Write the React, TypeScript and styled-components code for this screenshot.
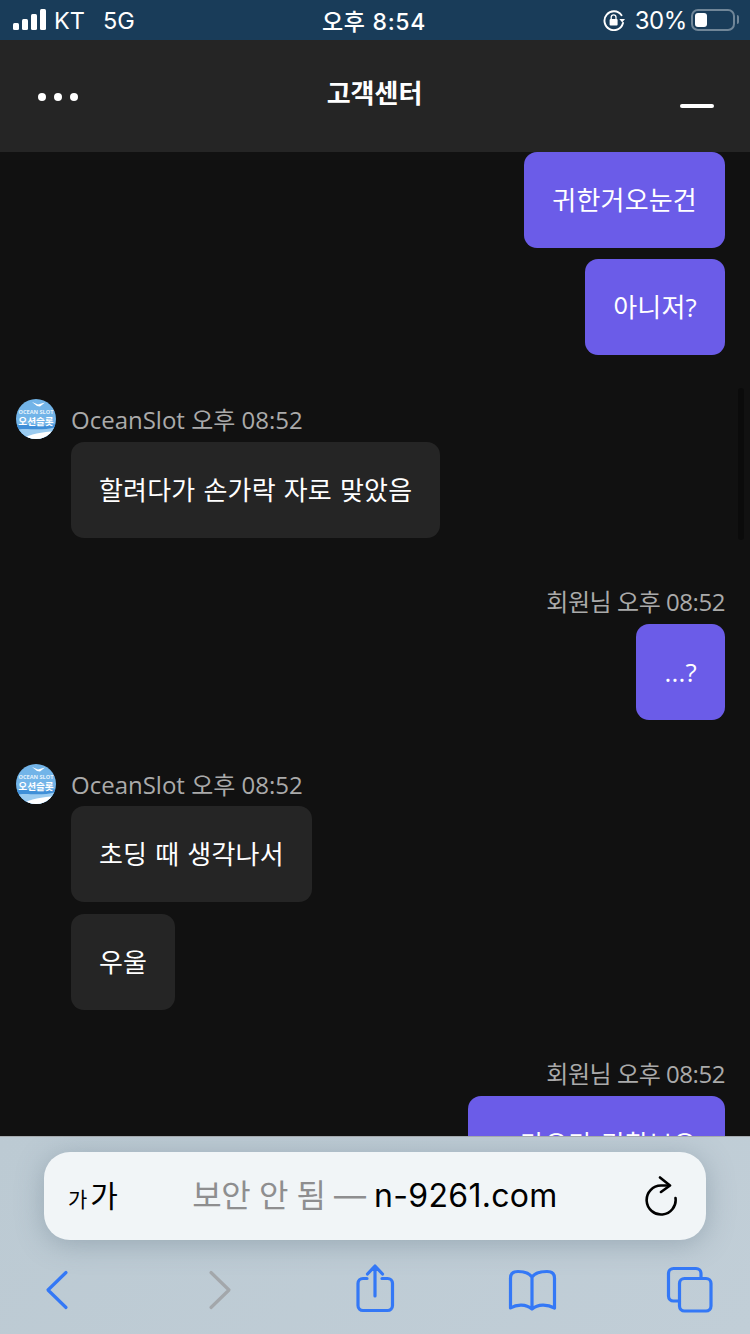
import React from 'react';
import styled, { createGlobalStyle } from 'styled-components';

const Global = createGlobalStyle`
  html, body {
    margin: 0;
    padding: 0;
    background: #111111;
  }
  * {
    box-sizing: border-box;
  }
`;

const Page = styled.div`
  width: 750px;
  height: 1334px;
  display: flex;
  flex-direction: column;
  overflow: hidden;
  font-family: 'Open Sans', 'Noto Sans CJK KR', sans-serif;
`;

const StatusBar = styled.div`
  height: 40px;
  flex: none;
  background: #193c59;
  color: #ffffff;
  display: grid;
  grid-template-columns: 1fr auto 1fr;
  align-items: center;
  padding: 0 15px 0 13px;
  font-family: Inter, 'Noto Sans CJK KR', sans-serif;
  font-size: 24px;
`;

const StatusLeft = styled.div`
  display: flex;
  align-items: center;
`;

const Signal = styled.div`
  display: flex;
  align-items: flex-end;
  gap: 3px;
  height: 22px;
  margin-right: 8px;
  margin-bottom: 2px;
`;

const SignalBar = styled.span<{ $h: number }>`
  width: 6px;
  height: ${(p) => p.$h}px;
  background: #ffffff;
  border-radius: 1.5px;
`;

const Carrier = styled.span<{ $gap?: number }>`
  margin-left: ${(p) => p.$gap || 0}px;
  font-weight: 400;
  font-size: 23.5px;
`;

const Clock = styled.div`
  font-weight: 500;
  font-size: 23px;
  letter-spacing: 0.7px;
`;

const StatusRight = styled.div`
  display: flex;
  align-items: center;
  justify-content: flex-end;
`;

const Percent = styled.span`
  margin: 0 4px 0 10px;
  letter-spacing: -0.4px;
`;

const Battery = styled.div`
  width: 44px;
  height: 22px;
  border: 2px solid rgba(255, 255, 255, 0.38);
  border-radius: 7px;
  padding: 2px;
  position: relative;
  &::after {
    content: '';
    position: absolute;
    right: -6px;
    top: 4px;
    width: 2px;
    height: 9px;
    border-radius: 0 2px 2px 0;
    background: rgba(255, 255, 255, 0.38);
  }
`;

const BatteryFill = styled.div`
  width: 12px;
  height: 100%;
  background: #ffffff;
  border-radius: 3px;
`;

const Header = styled.div`
  height: 112px;
  flex: none;
  background: #252525;
  display: grid;
  grid-template-columns: 1fr auto 1fr;
  align-items: center;
  padding: 0 36px 0 38px;
`;

const Dots = styled.div`
  display: flex;
  gap: 8px;
  margin-top: 1px;
`;

const Dot = styled.span`
  width: 8px;
  height: 8px;
  border-radius: 50%;
  background: #ffffff;
`;

const Title = styled.div`
  color: #ffffff;
  font-size: 26px;
  line-height: 36px;
  font-weight: 700;
  margin: 0 3px 8px 0;
  font-family: 'Noto Sans CJK KR', sans-serif;
`;

const Minimize = styled.span`
  justify-self: end;
  width: 34px;
  height: 4px;
  border-radius: 2px;
  background: #ffffff;
  margin-top: 19px;
`;

const Chat = styled.div`
  flex: 1;
  min-height: 0;
  position: relative;
  overflow: hidden;
  background: #111111;
  padding: 0 25px 0 16px;
  display: flex;
  flex-direction: column;
`;

const ScrollThumb = styled.div`
  position: absolute;
  right: 6px;
  top: 236px;
  width: 6px;
  height: 152px;
  border-radius: 3px;
  background: #0b0b0b;
`;

const Group = styled.div<{ $mine?: boolean; $top?: number }>`
  flex: none;
  display: flex;
  flex-direction: column;
  align-items: ${(p) => (p.$mine ? 'flex-end' : 'flex-start')};
  gap: 11.4px;
  margin-top: ${(p) => p.$top || 0}px;
`;

const SenderRow = styled.div`
  display: flex;
  gap: 15px;
  height: 42.6px;
  margin-bottom: -11.4px;
`;

const Avatar = styled.svg`
  width: 40px;
  height: 40px;
  display: block;
  flex: none;
`;

const Meta = styled.div<{ $mine?: boolean }>`
  color: #aaaaaa;
  font-size: 24px;
  line-height: ${(p) => (p.$mine ? 24 : 34)}px;
  height: 34px;
  margin-top: ${(p) => (p.$mine ? 0 : 4)}px;
  margin-bottom: ${(p) => (p.$mine ? -11.4 : 0)}px;
  letter-spacing: ${(p) => (p.$mine ? -0.45 : 0)}px;
  white-space: nowrap;
`;

const Bubble = styled.div<{ $mine?: boolean }>`
  flex: none;
  height: 96px;
  padding: 28px;
  margin-left: ${(p) => (p.$mine ? 0 : 55)}px;
  border-radius: 13px;
  font-size: 26px;
  line-height: 40px;
  letter-spacing: 0.2px;
  word-spacing: 1px;
  white-space: nowrap;
  color: #ffffff;
  background: ${(p) => (p.$mine ? '#6b5ce8' : '#252525')};
`;

const Toolbar = styled.div`
  height: 198px;
  flex: none;
  border-top: 1px solid #a6abaf;
  background: linear-gradient(135deg, #bccad3 0%, #c1ced7 100%);
  padding: 15px 0 0;
  font-family: Inter, 'Noto Sans CJK KR', sans-serif;
`;

const UrlBar = styled.div`
  margin: 0 44px;
  height: 88px;
  border-radius: 26px;
  background: #f1f5f7;
  box-shadow: 0 4px 28px rgba(90, 110, 125, 0.38);
  display: grid;
  grid-template-columns: 100px 1fr 100px;
  align-items: center;
`;

const FontSize = styled.div`
  display: flex;
  align-items: baseline;
  gap: 3px;
  padding-left: 24px;
  color: #000000;
  font-family: 'Noto Sans CJK KR', sans-serif;
`;

const FontGlyph = styled.span<{ $size: number }>`
  font-size: ${(p) => p.$size}px;
  line-height: 40px;
`;

const Address = styled.div`
  text-align: center;
  font-size: 32px;
  line-height: 44px;
  letter-spacing: 0.3px;
  color: #000000;
  white-space: nowrap;
`;

const Insecure = styled.span`
  color: #8e8e8f;
  letter-spacing: -0.45px;
`;

const Reload = styled.svg`
  justify-self: end;
  margin-right: 26px;
  width: 36px;
  height: 40px;
`;

const Nav = styled.div`
  display: flex;
  justify-content: space-between;
  margin-top: 20px;
  padding: 0 30px 0 27px;
`;

const NavIcon = styled.svg`
  width: 60px;
  height: 60px;
  display: block;
  fill: none;
  stroke-linecap: round;
  stroke-linejoin: round;
  stroke-width: 3.2px;
`;

const Logo = () => (
  <Avatar viewBox="0 0 40 40">
    <defs>
      <clipPath id="logo-clip">
        <circle cx="20" cy="20" r="20" />
      </clipPath>
    </defs>
    <g clipPath="url(#logo-clip)">
      <rect width="40" height="40" fill="#72b4e8" />
      <path d="M0 26 C10 24 24 29 40 25 V40 H0 Z" fill="#3f8fd8" />
      <path d="M0 31 C10 28 22 33 40 28 V40 H0 Z" fill="#9acbf0" />
      <path d="M6 40 C14 35 26 33 40 32 V40 Z" fill="#ffffff" />
      <path d="M16 3 L22 5.5 L29 3.5 L24 7.5 L21 7 Z" fill="#ffffff" />
      <text x="20" y="14.5" textAnchor="middle" fontSize="5.6" fontWeight="700" fill="#e4f2fc" fontFamily="Open Sans, sans-serif">OCEAN SLOT</text>
      <text x="20" y="25.5" textAnchor="middle" fontSize="9.6" fontWeight="700" fill="#ffffff" fontFamily="Noto Sans CJK KR, sans-serif">오션슬롯</text>
    </g>
  </Avatar>
);

const App = () => {
  return (
    <Page>
      <Global />
      <StatusBar>
        <StatusLeft>
          <Signal>
            <SignalBar $h={7} />
            <SignalBar $h={11} />
            <SignalBar $h={16} />
            <SignalBar $h={21} />
          </Signal>
          <Carrier>KT</Carrier>
          <Carrier $gap={18}>5G</Carrier>
        </StatusLeft>
        <Clock>오후 8:54</Clock>
        <StatusRight>
          <svg width="22" height="22" viewBox="0 0 22 22" fill="none">
            <path d="M18.5 6.2 A9.4 9.4 0 1 0 20 14" stroke="#fff" strokeWidth="1.9" strokeLinecap="round" />
            <path d="M16.4 10 L22 10 L19.2 13.6 Z" fill="#fff" />
            <rect x="6.6" y="10" width="8" height="6.4" rx="1" fill="#fff" />
            <path d="M8.2 10 V8.2 a2.4 2.4 0 0 1 4.8 0 V10" stroke="#fff" strokeWidth="1.3" />
          </svg>
          <Percent>30%</Percent>
          <Battery>
            <BatteryFill />
          </Battery>
        </StatusRight>
      </StatusBar>

      <Header>
        <Dots>
          <Dot />
          <Dot />
          <Dot />
        </Dots>
        <Title>고객센터</Title>
        <Minimize />
      </Header>

      <Chat>
        <Group $mine>
          <Bubble $mine>귀한거오눈건</Bubble>
          <Bubble $mine>아니저?</Bubble>
        </Group>

        <Group $top={43.6}>
          <SenderRow>
            <Logo />
            <Meta>OceanSlot 오후 08:52</Meta>
          </SenderRow>
          <Bubble>할려다가 손가락 자로 맞았음</Bubble>
        </Group>

        <Group $mine $top={52}>
          <Meta $mine>회원님 오후 08:52</Meta>
          <Bubble $mine>...?</Bubble>
        </Group>

        <Group $top={44}>
          <SenderRow>
            <Logo />
            <Meta>OceanSlot 오후 08:52</Meta>
          </SenderRow>
          <Bubble>초딩 때 생각나서</Bubble>
          <Bubble>우울</Bubble>
        </Group>

        <Group $mine $top={52}>
          <Meta $mine>회원님 오후 08:52</Meta>
          <Bubble $mine>ㄴ라오라 귀찮보오</Bubble>
        </Group>

        <ScrollThumb />
      </Chat>

      <Toolbar>
        <UrlBar>
          <FontSize>
            <FontGlyph $size={21}>가</FontGlyph>
            <FontGlyph $size={30}>가</FontGlyph>
          </FontSize>
          <Address>
            <Insecure>보안 안 됨 — </Insecure>n-9261.com
          </Address>
          <Reload viewBox="0 0 36 40" fill="none" stroke="#000" strokeWidth="2.6" strokeLinecap="round" strokeLinejoin="round">
            <path d="M31.5 22 A14.5 14.5 0 1 1 17 9.5 H25" />
            <path d="M16 1.5 L26 9.5 L17 16" />
          </Reload>
        </UrlBar>
        <Nav>
          <NavIcon viewBox="0 0 60 60" stroke="#3478f6">
            <path d="M39 12.5 L21 30 L39 47.5" />
          </NavIcon>
          <NavIcon viewBox="0 0 60 60" stroke="#a3a7ab">
            <path d="M26 12.5 L44 30 L26 47.5" />
          </NavIcon>
          <NavIcon viewBox="0 0 60 60" stroke="#3478f6">
            <path d="M23 18.5 H19 a5 5 0 0 0 -5 5 V45.5 a5 5 0 0 0 5 5 H43.5 a5 5 0 0 0 5 -5 V23.5 a5 5 0 0 0 -5 -5 H38" />
            <path d="M31 36 V6 M23.5 14 L31 6 L38.5 14" />
          </NavIcon>
          <NavIcon viewBox="0 0 60 60" stroke="#3478f6">
            <path d="M30 17 C27 13 21 11.5 16 11.5 C11 11.5 8.5 13.5 8.5 18 V48 C15 44 24 44 30 49 C36 44 45 44 52.5 48 V18 C52.5 13.5 50 11.5 45 11.5 C39 11.5 33 13 30 17 Z M30 17 V49" />
          </NavIcon>
          <NavIcon viewBox="0 0 60 60" stroke="#3478f6">
            <path d="M19.5 41 H13.5 a5 5 0 0 1 -5 -5 V13.5 a5 5 0 0 1 5 -5 H36 a5 5 0 0 1 5 5 V18.5" />
            <rect x="19.5" y="18.5" width="31.5" height="32.5" rx="5" />
          </NavIcon>
        </Nav>
      </Toolbar>
    </Page>
  );
};

export default App;
